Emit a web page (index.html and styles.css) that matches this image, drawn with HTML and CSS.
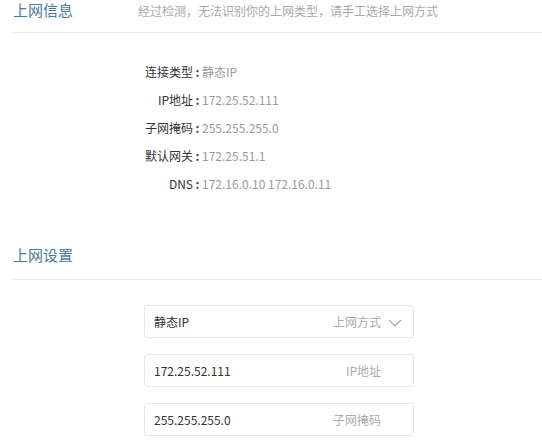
FILE: index.html
```html
<!doctype html>
<html lang="zh-CN">
  <head>
    <meta charset="UTF-8" />
    <meta name="viewport" content="width=device-width, initial-scale=1.0" />
    <title>上网设置</title>
    <link rel="stylesheet" href="styles.css">
  </head>
  <body>
    <div class="section-head">
        <h2>上网信息</h2>
        <p class="desc">经过检测，无法识别你的上网类型，请手工选择上网方式</p>
    </div>

    <div class="info">
        <div class="row"><span class="label">连接类型</span><span class="colon">:</span><span class="value">静态IP</span></div>
        <div class="row"><span class="label">IP地址</span><span class="colon">:</span><span class="value">172.25.52.111</span></div>
        <div class="row"><span class="label">子网掩码</span><span class="colon">:</span><span class="value">255.255.255.0</span></div>
        <div class="row"><span class="label">默认网关</span><span class="colon">:</span><span class="value">172.25.51.1</span></div>
        <div class="row"><span class="label">DNS</span><span class="colon">:</span><span class="value">172.16.0.10 172.16.0.11</span></div>
    </div>

    <div class="section-head second">
        <h2>上网设置</h2>
    </div>

    <div class="form">
        <div class="field">
            <span class="text">静态IP</span>
            <span class="hint">上网方式</span>
            <span class="arrow">
                <svg width="14" height="8" viewBox="0 0 14 8"><path d="M1 1 L7 7 L13 1" fill="none" stroke="#a6a6a6" stroke-width="1.2" /></svg>
            </span>
        </div>
        <div class="field">
            <span class="text">172.25.52.111</span>
            <span class="hint">IP地址</span>
            <span class="arrow"></span>
        </div>
        <div class="field">
            <span class="text">255.255.255.0</span>
            <span class="hint">子网掩码</span>
            <span class="arrow"></span>
        </div>
    </div>
  </body>
</html>
```

FILE: styles.css
```css
* {
    box-sizing: border-box;
}

body {
    margin: 0;
    padding: 0;
    background-color: #fff;
    font-family: "Noto Sans CJK SC", "Liberation Sans", sans-serif;
    font-size: 12px;
    color: #333;
}

.section-head {
    display: flex;
    align-items: baseline;
    margin-left: 13px;
    padding-top: 1px;
    padding-bottom: 12px;
    border-bottom: 1px solid #e9e9e9;
}

.section-head h2 {
    margin: 0;
    width: 125px;
    font-size: 15px;
    font-weight: normal;
    line-height: 18px;
    color: #4a7ba3;
}

.section-head .desc {
    margin: 0;
    font-size: 12px;
    line-height: 18px;
    color: #a8a8a8;
}

.section-head.second {
    margin-top: 48px;
    padding-top: 0;
    padding-bottom: 15px;
}

.info {
    margin-top: 25px;
    padding-left: 100px;
}

.row {
    display: flex;
    line-height: 28px;
}

.row .label {
    width: 93px;
    text-align: right;
    color: #333;
}

.row .colon {
    width: 9px;
    text-align: center;
    font-weight: bold;
    color: #444;
}

.row .value {
    color: #9a9a9a;
}

.form {
    margin-top: 25px;
    margin-left: 144px;
    display: flex;
    flex-direction: column;
    gap: 16px;
}

.field {
    width: 270px;
    height: 33px;
    display: flex;
    align-items: center;
    padding: 0 8px 0 9px;
    border: 1px solid #e6e6e6;
    border-radius: 3px;
}

.field .text {
    flex: 1;
    color: #333;
}

.field .hint {
    color: #ababab;
}

.field .arrow {
    width: 24px;
    display: flex;
    align-items: center;
    padding-left: 7px;
    padding-top: 2px;
}
```
